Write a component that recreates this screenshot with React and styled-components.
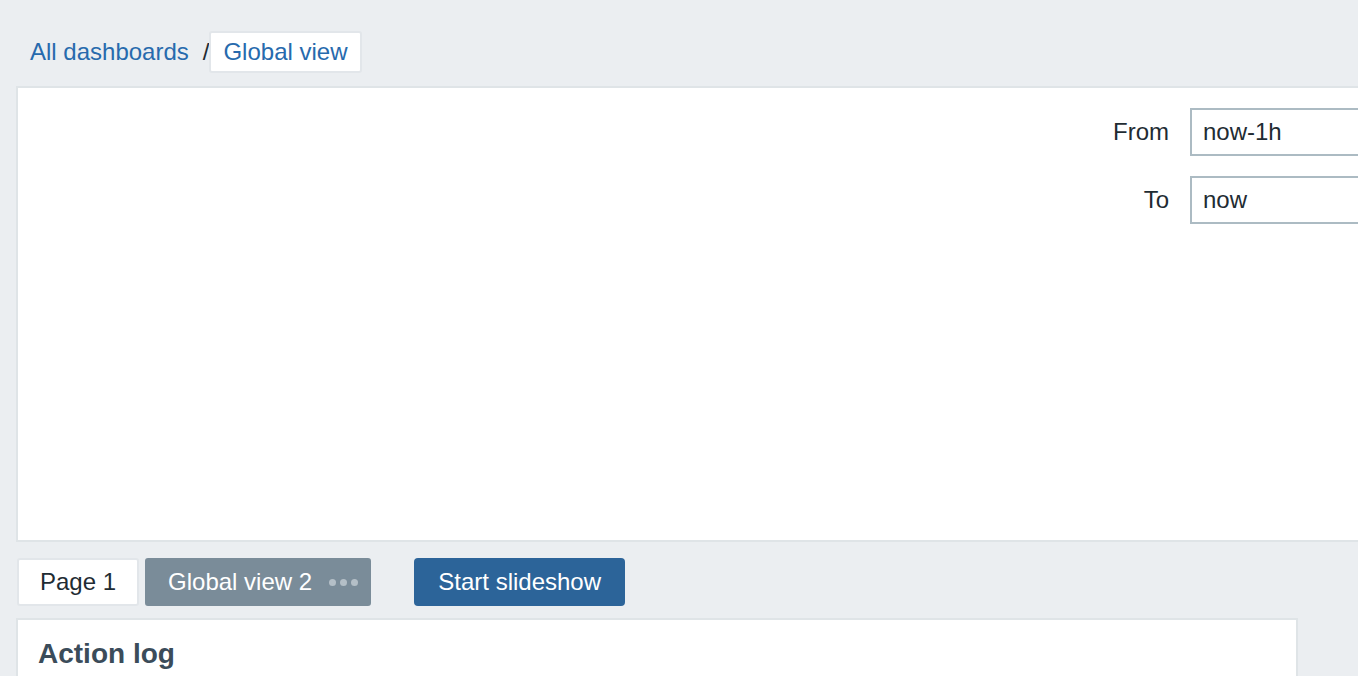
import React from "react";
import styled, { createGlobalStyle } from "styled-components";

const GlobalStyle = createGlobalStyle`
  html, body {
    margin: 0;
    padding: 0;
    overflow: hidden;
    background: #ebeef1;
  }
  body {
    font-family: "Liberation Sans", Arial, sans-serif;
    font-size: 24px;
    color: #1f2c33;
  }
`;

const Page = styled.div`
  width: 1358px;
  height: 676px;
  overflow: hidden;
  padding-left: 16px;
  box-sizing: border-box;
`;

const Breadcrumbs = styled.nav`
  display: flex;
  align-items: center;
  height: 42px;
  margin-top: 31px;
  margin-bottom: 13px;
  padding-left: 14px;
`;

const Crumb = styled.a`
  color: #276aad;
  text-decoration: none;
  line-height: 28px;
`;

const Separator = styled.span`
  margin: 0 0 0 14px;
  color: #1f2c33;
`;

const CurrentCrumb = styled.span`
  display: flex;
  align-items: center;
  height: 42px;
  box-sizing: border-box;
  padding: 0 12px;
  background: #fff;
  border: 2px solid #e2e6ea;
  border-radius: 3px;
  color: #276aad;
`;

const FilterPanel = styled.section`
  margin-right: -40px;
  height: 456px;
  box-sizing: border-box;
  background: #fff;
  border: 2px solid #dfe4e7;
  padding-top: 20px;
  display: flex;
  justify-content: flex-end;
`;

const FilterForm = styled.div`
  display: grid;
  grid-template-columns: auto 206px;
  column-gap: 21px;
  row-gap: 20px;
  align-content: start;
  align-items: center;
`;

const Label = styled.label`
  text-align: right;
  color: #1f2c33;
`;

const Input = styled.div`
  height: 48px;
  box-sizing: border-box;
  border: 2px solid #acbbc3;
  border-right: none;
  padding: 0 11px;
  display: flex;
  align-items: center;
  color: #1f2c33;
`;

const TabBar = styled.div`
  display: flex;
  align-items: center;
  margin-top: 16px;
  height: 48px;
`;

const Tab = styled.div`
  display: flex;
  align-items: center;
  height: 48px;
  box-sizing: border-box;
  padding: ${(p) => (p.$active ? "0 11px 0 21px" : "0 21px")};
  margin-right: 6px;
  border-radius: 3px;
  background: ${(p) => (p.$active ? "#7a8c99" : "#fff")};
  border: 2px solid ${(p) => (p.$active ? "#7a8c99" : "#e2e6ea")};
  color: ${(p) => (p.$active ? "#fff" : "#1f2c33")};
  &:first-child {
    margin-left: 1px;
  }
`;

const Dots = styled.span`
  display: flex;
  gap: 4px;
  margin-left: 17px;
  span {
    width: 7px;
    height: 7px;
    border-radius: 50%;
    background: #b4bfc7;
  }
`;

const Button = styled.button`
  height: 48px;
  margin-left: 37px;
  padding: 0 24px;
  width: 211px;
  border: none;
  border-radius: 4px;
  background: #2c6499;
  color: #fff;
  font-family: inherit;
  font-size: 24px;
`;

const Widget = styled.section`
  margin-top: 12px;
  width: 1282px;
  height: 200px;
  box-sizing: border-box;
  background: #fff;
  border: 2px solid #dfe4e7;
  padding: 18px 20px;
`;

const WidgetTitle = styled.h4`
  margin: 0;
  font-size: 28px;
  font-weight: 700;
  color: #3b4c5a;
  line-height: 32px;
`;

export default function App() {
  return (
    <>
      <GlobalStyle />
      <Page>
        <Breadcrumbs>
          <Crumb>All dashboards</Crumb>
          <Separator>/</Separator>
          <CurrentCrumb>Global view</CurrentCrumb>
        </Breadcrumbs>
        <FilterPanel>
          <FilterForm>
            <Label>From</Label>
            <Input>now-1h</Input>
            <Label>To</Label>
            <Input>now</Input>
          </FilterForm>
        </FilterPanel>
        <TabBar>
          <Tab>Page 1</Tab>
          <Tab $active>
            Global view 2
            <Dots>
              <span />
              <span />
              <span />
            </Dots>
          </Tab>
          <Button>Start slideshow</Button>
        </TabBar>
        <Widget>
          <WidgetTitle>Action log</WidgetTitle>
        </Widget>
      </Page>
    </>
  );
}
